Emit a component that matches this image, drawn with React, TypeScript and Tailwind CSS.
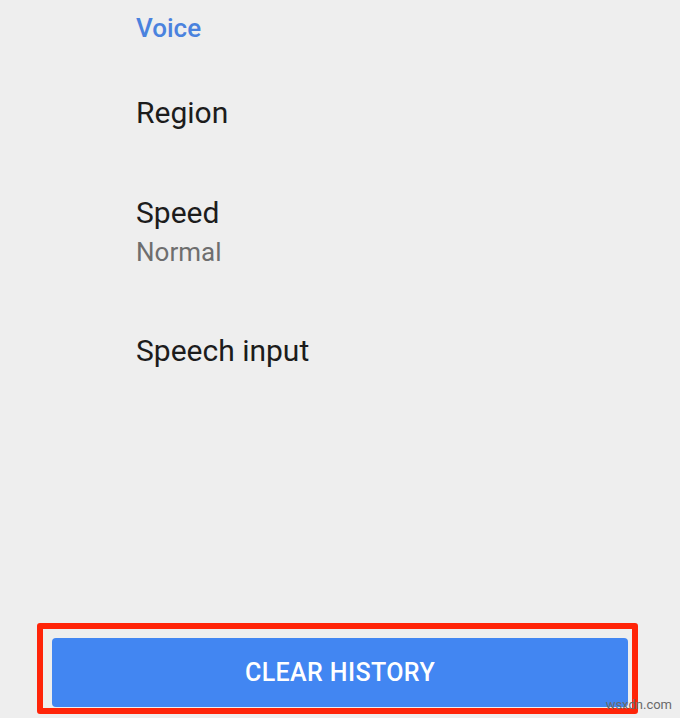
const font = { fontFamily: "Roboto, 'Noto Sans', sans-serif" };

export default function App() {
  return (
    <main
      className="relative flex h-[718px] w-[680px] flex-col overflow-hidden bg-[#eeeeee]"
      style={font}
    >
      {/* Settings list */}
      <div className="flex flex-col pl-[136px]">
        <p className="mt-[12px] text-[26px] leading-[32px] font-medium text-[#4a82de]">
          Voice
        </p>
        <p className="mt-[51px] text-[30px] leading-[36px] text-[#1c1c1c]">
          Region
        </p>
        <div className="mt-[64px] flex flex-col gap-[5px]">
          <p className="text-[30px] leading-[36px] text-[#1c1c1c]">Speed</p>
          <p className="text-[26px] leading-[32px] text-[#6e6e6e]">Normal</p>
        </div>
        <p className="mt-[65px] text-[30px] leading-[36px] text-[#1c1c1c]">
          Speech input
        </p>
      </div>

      {/* Clear history button, highlighted */}
      <div className="mt-auto mb-[4px] ml-[37px] w-[601px] rounded-[3px] border-[6px] border-[#ff2408] pt-[9px] pr-[4px] pb-[1px] pl-[9px]">
        <button className="flex h-[69px] w-full items-center justify-center rounded-[4px] bg-[#4286f2] text-[25px] font-medium tracking-[0.4px] text-white">
          CLEAR HISTORY
        </button>
      </div>

      <span className="absolute right-[8px] bottom-[4px] text-[13px] text-[#6a6a6a]">
        wsxdn.com
      </span>
    </main>
  );
}
